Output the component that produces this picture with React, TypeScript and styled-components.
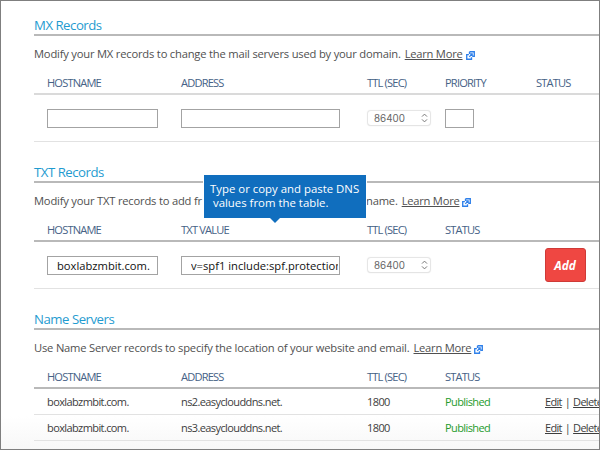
import React from 'react';
import styled, { createGlobalStyle } from 'styled-components';

const GlobalStyle = createGlobalStyle`
  * { box-sizing: border-box; }
  body { margin: 0; background: #fff; }
`;

const Frame = styled.main`
  position: relative;
  width: 600px;
  height: 450px;
  padding: 14px 0 0 33px;
  overflow: hidden;
  border: 1px solid #7f7f7f;
  background: linear-gradient(#fff 415px, #f7f7f7 450px);
  font-family: 'Open Sans', 'Noto Sans', sans-serif;
  color: #333;
  white-space: nowrap;
`;

const Section = styled.section<{ $height: number }>`
  height: ${(p) => p.$height}px;
`;

const Heading = styled.h2`
  height: 21px;
  margin: 0;
  border-bottom: 2px solid #b9b9b9;
  color: #1f9bd0;
  font-size: 13.2px;
  font-weight: 400;
  letter-spacing: -0.48px;
  line-height: 20px;
`;

const Description = styled.p`
  display: flex;
  height: 36px;
  margin: 0;
  color: #505050;
  font-size: 11.2px;
  font-weight: 400;
  line-height: 36px;
  letter-spacing: -0.2px;
`;

const Lead = styled.span`
  width: 332px;
`;

const LearnMore = styled.a`
  display: flex;
  align-items: center;
  gap: 3px;
  margin-left: 4px;
  letter-spacing: -0.25px;

  span {
    text-decoration: underline;
    text-decoration-thickness: 1px;
    text-underline-offset: 1px;
  }

  svg {
    margin-top: 2px;
  }
`;

const Row = styled.div<{ $columns: string; $height: number; $line?: string; $thick?: number }>`
  display: grid;
  grid-template-columns: ${(p) => p.$columns};
  align-items: center;
  height: ${(p) => p.$height}px;
  padding-left: 13px;
  border-bottom: ${(p) => p.$thick ?? 1}px solid ${(p) => p.$line ?? '#e2e2e2'};
`;

const HeaderCell = styled.span`
  color: #466286;
  font-size: 11.1px;
  font-weight: 400;
  letter-spacing: -0.82px;
  line-height: 18px;
`;

const Cell = styled.span<{ $published?: boolean }>`
  color: ${(p) => (p.$published ? '#259b2c' : '#3d3d3d')};
  font-size: 11px;
  font-weight: 400;
  letter-spacing: -0.6px;
  line-height: 18px;
`;

const Actions = styled(Cell)`
  display: flex;
  gap: 3px;
  letter-spacing: -0.7px;

  u {
    text-decoration-thickness: 1px;
    text-underline-offset: 1px;
  }
`;

const Field = styled.input<{ $width: number }>`
  width: ${(p) => p.$width}px;
  height: 19px;
  margin: 0;
  padding: 0 1px 0 9px;
  border: 1px solid #a3a3a3;
  border-radius: 0;
  outline: 0;
  background: #fff;
  color: #111;
  font: 400 11.2px 'Open Sans', 'Noto Sans', sans-serif;
`;

const Select = styled.div`
  display: flex;
  align-items: center;
  justify-content: space-between;
  width: 62px;
  height: 14px;
  margin-left: 1px;
  padding: 0 2px 0 6px;
  border-radius: 3px;
  box-shadow: 0 0 1px 0.5px #e4e4e4, 0 1px 1px #e4e4e4;
  background: #fff;
  color: #666;
  font: 400 9.8px Inter, sans-serif;
`;

const AddButton = styled.button`
  width: 41px;
  height: 34px;
  padding: 0 1px 1px 0;
  border: 1px solid #cf3a37;
  border-radius: 3px;
  background: #ef4742;
  color: #fff;
  font: italic 700 11.9px 'Open Sans', sans-serif;
`;

const Callout = styled.div`
  position: absolute;
  top: 174px;
  left: 203px;
  width: 162px;
  height: 43px;
  padding: 7px 0 0 6px;
  background: #106ebe;
  box-shadow: 0 0 0 1px #fff;
  color: #fff;
  font-size: 11.4px;
  line-height: 14px;
  white-space: pre;

  &::after {
    content: '';
    position: absolute;
    top: 100%;
    left: 66px;
    border: 5px solid transparent;
    border-top-color: #106ebe;
    border-bottom: 0;
  }
`;

const MX_COLUMNS = '134px 186px 78px 91px 1fr';
const TXT_COLUMNS = '134px 186px 78px 100px 1fr';

const PopoutIcon = () => (
  <svg width="9" height="9" viewBox="0 0 10 10" fill="none" stroke="#2f80ea" strokeWidth="1.5">
    <path d="M3.9.8h5.3v5H6.9M3.9.8v2.4M3.2 4H.8v5.2h5.3V7" />
    <path d="M3.6 6.5 6.8 3.2M4.6 3.2h2.2v2.3" />
  </svg>
);

const MoreLink = () => (
  <LearnMore>
    <span>Learn More</span>
    <PopoutIcon />
  </LearnMore>
);

const TtlSelect = () => (
  <Select>
    86400
    <svg width="7" height="10" viewBox="0 0 7 10" fill="none" stroke="#777" strokeWidth="1">
      <path d="m1 3.6 2.5-2.5L6 3.6M1 6.4l2.5 2.5L6 6.4" />
    </svg>
  </Select>
);

const HeaderRow = ({ labels, columns, line = '#b9b9b9' }: { labels: string[]; columns: string; line?: string }) => (
  <Row $columns={columns} $height={23} $line={line} $thick={2}>
    {labels.map((label) => (
      <HeaderCell key={label}>{label}</HeaderCell>
    ))}
  </Row>
);

const nameServers = ['ns2.easyclouddns.net.', 'ns3.easyclouddns.net.'];

export default function App() {
  return (
    <>
      <GlobalStyle />
      <Frame>
        <Section $height={147}>
          <Heading>MX Records</Heading>
          <Description>
            Modify your MX records to change the mail servers used by your domain.
            <MoreLink />
          </Description>
          <HeaderRow columns={MX_COLUMNS} labels={['HOSTNAME', 'ADDRESS', 'TTL (SEC)', 'PRIORITY', 'STATUS']} line="#dadada" />
          <Row $columns={MX_COLUMNS} $height={47}>
            <Field $width={111} aria-label="Hostname" />
            <Field $width={159} aria-label="Address" />
            <TtlSelect />
            <Field $width={29} aria-label="Priority" />
          </Row>
        </Section>

        <Section $height={147}>
          <Heading>TXT Records</Heading>
          <Description>
            <Lead>Modify your TXT records to add fr</Lead>
            name.
            <MoreLink />
          </Description>
          <HeaderRow columns={TXT_COLUMNS} labels={['HOSTNAME', 'TXT VALUE', 'TTL (SEC)', 'STATUS']} />
          <Row $columns={TXT_COLUMNS} $height={47}>
            <Field $width={111} defaultValue="boxlabzmbit.com." aria-label="Hostname" />
            <Field $width={159} defaultValue="v=spf1 include:spf.protection.outlook.com" aria-label="TXT value" />
            <TtlSelect />
            <span />
            <AddButton>Add</AddButton>
          </Row>
        </Section>

        <Section $height={130}>
          <Heading>Name Servers</Heading>
          <Description>
            Use Name Server records to specify the location of your website and email.
            <MoreLink />
          </Description>
          <HeaderRow columns={TXT_COLUMNS} labels={['HOSTNAME', 'ADDRESS', 'TTL (SEC)', 'STATUS']} />
          {nameServers.map((server) => (
            <Row key={server} $columns={TXT_COLUMNS} $height={26}>
              <Cell>boxlabzmbit.com.</Cell>
              <Cell>{server}</Cell>
              <Cell>1800</Cell>
              <Cell $published>Published</Cell>
              <Actions>
                <u>Edit</u>
                <span>|</span>
                <u>Delete</u>
              </Actions>
            </Row>
          ))}
        </Section>

        <Callout>{'Type or copy and paste DNS\n values from the table.'}</Callout>
      </Frame>
    </>
  );
}
